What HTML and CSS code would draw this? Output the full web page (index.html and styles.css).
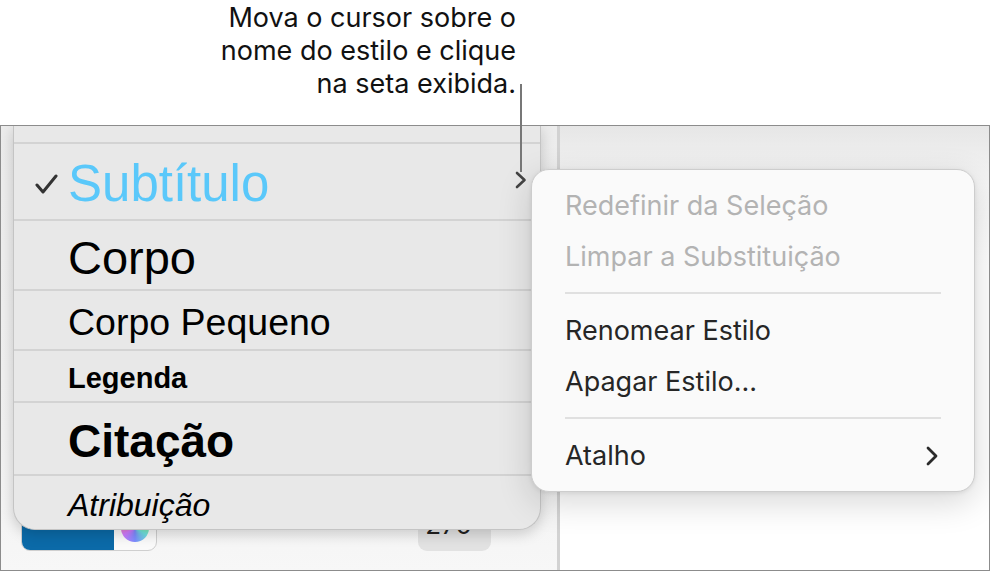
FILE: index.html
```html
<!DOCTYPE html>
<html lang="pt">
<head>
    <meta charset="UTF-8">
    <meta name="viewport" content="width=device-width, initial-scale=1.0">
    <title>Estilos de parágrafo</title>
    <link rel="stylesheet" href="styles.css">
</head>
<body>

    <!-- Callout -->
    <div class="callout">
        <p class="callout-text">Mova o cursor sobre o<br>nome do estilo e clique<br>na seta exibida.</p>
    </div>
    <span class="callout-line"></span>

    <!-- Window -->
    <div class="window">
        <div class="sidebar">
            <div class="sidebar-controls">
                <div class="color-well">
                    <span class="swatch"></span>
                    <span class="wheel-box"><span class="wheel"></span></span>
                </div>
                <div class="angle">270°</div>
            </div>

            <!-- Paragraph styles popover -->
            <div class="styles-popover">
                <div class="style-row row-top"></div>
                <div class="style-row row-subtitle">
                    <svg class="check" width="24" height="20" viewBox="0 0 24 20">
                        <polyline points="2,11 8,18 21,2" fill="none" stroke="#333" stroke-width="3" stroke-linecap="round" stroke-linejoin="round"/>
                    </svg>
                    <span>Subtítulo</span>
                    <svg class="row-arrow" width="12" height="18" viewBox="0 0 12 18">
                        <polyline points="2,2 9.5,9 2,16" fill="none" stroke="#444" stroke-width="2.6" stroke-linecap="round" stroke-linejoin="round"/>
                    </svg>
                </div>
                <div class="style-row row-body"><span>Corpo</span></div>
                <div class="style-row row-small"><span>Corpo Pequeno</span></div>
                <div class="style-row row-caption"><span>Legenda</span></div>
                <div class="style-row row-quote"><span>Citação</span></div>
                <div class="style-row row-attr"><span>Atribuição</span></div>
            </div>
        </div>

        <div class="canvas"></div>

        <!-- Context menu -->
        <div class="context-menu">
            <div class="menu-item disabled">Redefinir da Seleção</div>
            <div class="menu-item disabled">Limpar a Substituição</div>
            <div class="menu-sep"></div>
            <div class="menu-item">Renomear Estilo</div>
            <div class="menu-item">Apagar Estilo...</div>
            <div class="menu-sep"></div>
            <div class="menu-item has-sub">
                <span>Atalho</span>
                <svg width="12" height="20" viewBox="0 0 12 20">
                    <polyline points="2,2 10,10 2,18" fill="none" stroke="#2a2a2a" stroke-width="2.8" stroke-linecap="round" stroke-linejoin="round"/>
                </svg>
            </div>
        </div>
    </div>

</body>
</html>
```

FILE: styles.css
```css
/* Page */
body { margin: 0; width: 990px; height: 572px; background: #fff; color: #1d1d1f; font-family: Inter, "Liberation Sans", sans-serif; overflow: hidden; position: relative; }

/* Callout */
.callout { height: 125px; }
.callout-text { margin: 0; padding: 1px 474px 0 0; text-align: right; font-size: 27px; line-height: 33px; color: #111; }
.callout-line { position: absolute; left: 520px; top: 84px; width: 2px; height: 88px; background: #777; z-index: 5; }

/* Window */
.window { position: relative; display: flex; height: 446px; border: 1px solid #8c8c8c; box-sizing: border-box; overflow: hidden; }
.sidebar { width: 556px; border-right: 3px solid #d2d2d2; display: flex; flex-direction: column; justify-content: flex-end; background: linear-gradient(#ececec, #f1f1f1 70%, #f7f7f7); }
.canvas { flex: 1; background: linear-gradient(#e6e6e6, #f6f6f6 60px, #fff 140px); }

/* Bottom controls, mostly hidden under the popover */
.sidebar-controls { display: flex; justify-content: space-between; align-items: flex-end; padding: 0 66px 19px 20px; }
.color-well { display: flex; width: 136px; height: 54px; border: 1px solid #cfcfcf; border-radius: 9px; overflow: hidden; background: #fafafa; box-sizing: border-box; }
.swatch { width: 92px; background: #0b6aa8; }
.wheel-box { flex: 1; display: flex; align-items: center; justify-content: center; padding-top: 8px; }
.wheel { width: 28px; height: 28px; border-radius: 50%; background: conic-gradient(#ffd86b, #9df27a, #6fe3e0, #7b8cff, #d27bff, #ff8a8a, #ffd86b); }
.angle { width: 73px; height: 60px; border-radius: 9px; background: #e2e2e2; font-size: 26px; line-height: 60px; text-align: center; padding-top: 4px; box-sizing: border-box; color: #222; }

/* Styles popover */
.styles-popover { position: absolute; left: 12px; top: 0; width: 526px; height: 403px; display: flex; flex-direction: column; background: #e8e8e8; border: 1px solid #c4c4c4; border-top: none; border-radius: 0 0 22px 22px; box-shadow: 0 4px 14px rgba(0,0,0,0.18); font-family: "Liberation Sans", Arial, sans-serif; color: #000; overflow: hidden; }
.style-row { display: flex; align-items: center; padding-left: 54px; padding-top: 4px; border-bottom: 2px solid #d3d3d3; box-sizing: border-box; flex: none; }
.row-top { height: 18px; padding-top: 0; }
.row-subtitle { height: 77px; padding-left: 21px; padding-right: 13px; font-size: 51px; color: #5ac8fa; }
.row-subtitle .check { margin-right: 9px; margin-top: 0; }
.row-subtitle .row-arrow { margin-left: auto; margin-top: -8px; }
.row-body { height: 70px; font-size: 47px; }
.row-small { height: 60px; font-size: 37.5px; }
.row-caption { height: 52px; font-size: 29px; font-weight: bold; }
.row-quote { height: 73px; font-size: 46px; font-weight: bold; }
.row-attr { flex: 1; border-bottom: none; font-size: 32px; font-style: italic; padding-top: 6px; }

/* Context menu */
.context-menu { position: absolute; left: 530px; top: 43px; width: 444px; height: 323px; padding: 10px 0 9px; box-sizing: border-box; background: #fafafa; border: 1px solid #cdcdcd; border-radius: 18px; box-shadow: 0 10px 34px rgba(0,0,0,0.16), 0 1px 4px rgba(0,0,0,0.08); z-index: 3; }
.menu-item { display: flex; align-items: center; justify-content: space-between; height: 51px; padding: 0 36px 0 33px; font-size: 27px; color: #262626; }
.menu-item.disabled { color: #b3b3b3; }
.menu-sep { height: 2px; margin: 10px 33px 11px; background: #e0e0e0; }
```
